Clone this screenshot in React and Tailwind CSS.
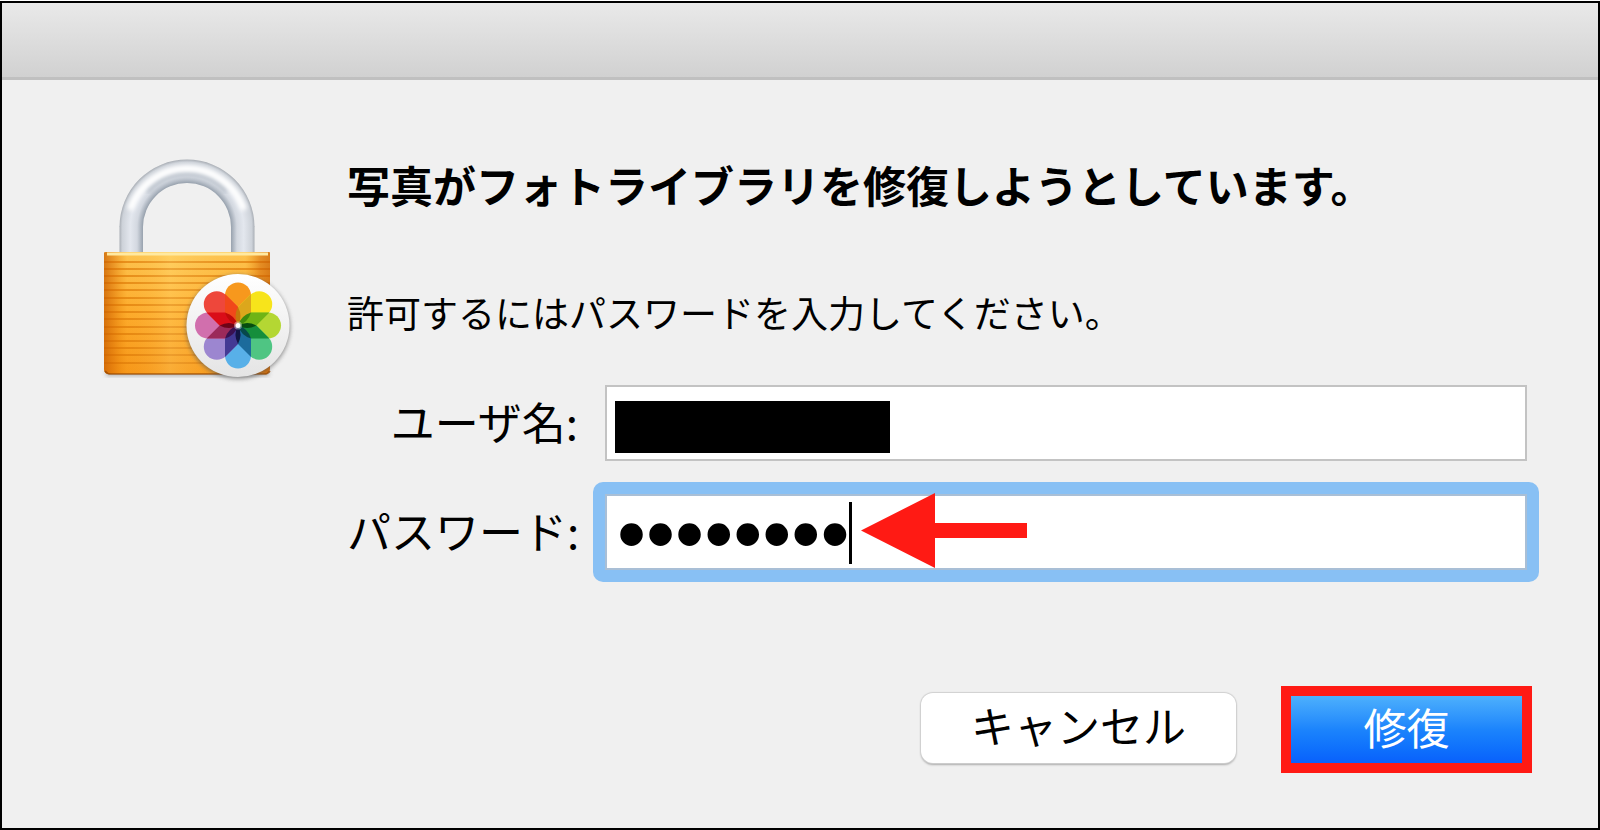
import React, { useState } from "react";

const petals = [
  { angle: 0, color: "#f7981d" },
  { angle: 45, color: "#f7e41b" },
  { angle: 90, color: "#b4d733" },
  { angle: 135, color: "#4fc583" },
  { angle: 180, color: "#58b0e8" },
  { angle: 225, color: "#9c86d0" },
  { angle: 270, color: "#d16fad" },
  { angle: 315, color: "#ee473b" },
];

const overlaps = [
  { angle: 0, color: "#dca71c" },
  { angle: 45, color: "#6fb416" },
  { angle: 90, color: "#158e3c" },
  { angle: 135, color: "#1c6b9c" },
  { angle: 180, color: "#433a94" },
  { angle: 225, color: "#9b2a5a" },
  { angle: 270, color: "#da0d18" },
  { angle: 315, color: "#f1481a" },
];

const cores = [
  { angle: 0, color: "#c5780c" },
  { angle: 45, color: "#3f8a0c" },
  { angle: 90, color: "#064d10" },
  { angle: 135, color: "#07484a" },
  { angle: 180, color: "#121645" },
  { angle: 225, color: "#3a1150" },
  { angle: 270, color: "#6e0418" },
  { angle: 315, color: "#c00a0a" },
];

const grooves = [262, 269, 276, 283, 290, 298, 305, 312, 319, 327, 334, 341, 348, 355, 363];

function LockIcon() {
  return (
    <svg viewBox="96 152 200 232" className="h-[232px] w-[200px]" role="img" aria-label="ロック">
      <defs>
        <linearGradient id="body" x1="0" x2="0" y1="0" y2="1">
          <stop offset="0" stopColor="#ffcb58" />
          <stop offset="0.5" stopColor="#ffb030" />
          <stop offset="1" stopColor="#f89a1c" />
        </linearGradient>
        <linearGradient id="sides" x1="0" x2="1" y1="0" y2="0">
          <stop offset="0" stopColor="#c85c00" stopOpacity="0.75" />
          <stop offset="0.06" stopColor="#d86a00" stopOpacity="0.5" />
          <stop offset="0.14" stopColor="#e88000" stopOpacity="0.1" />
          <stop offset="0.4" stopColor="#ffe080" stopOpacity="0.25" />
          <stop offset="0.85" stopColor="#e88000" stopOpacity="0.1" />
          <stop offset="0.94" stopColor="#d06000" stopOpacity="0.55" />
          <stop offset="1" stopColor="#c85c00" stopOpacity="0.7" />
        </linearGradient>
        <linearGradient id="legs" x1="119.500" x2="254.500" y1="0" y2="0" gradientUnits="userSpaceOnUse">
          <stop offset="0" stopColor="#a9aeb5" />
          <stop offset="0.02" stopColor="#cdd2d9" />
          <stop offset="0.08" stopColor="#e3e7ee" />
          <stop offset="0.13" stopColor="#d3d8e0" />
          <stop offset="0.174" stopColor="#98a2ae" />
          <stop offset="0.826" stopColor="#98a2ae" />
          <stop offset="0.87" stopColor="#d3d8e0" />
          <stop offset="0.92" stopColor="#e3e7ee" />
          <stop offset="0.98" stopColor="#cdd2d9" />
          <stop offset="1" stopColor="#a9aeb5" />
        </linearGradient>
        <radialGradient id="arch" cx="187" cy="227" r="67.500" gradientUnits="userSpaceOnUse">
          <stop offset="0.652" stopColor="#98a2ae" />
          <stop offset="0.74" stopColor="#d3d8e0" />
          <stop offset="0.84" stopColor="#e3e7ee" />
          <stop offset="0.96" stopColor="#cdd2d9" />
          <stop offset="1" stopColor="#a9aeb5" />
        </radialGradient>
        <linearGradient id="badge" x1="0" x2="0" y1="0" y2="1">
          <stop offset="0" stopColor="#ffffff" />
          <stop offset="1" stopColor="#e4e4e4" />
        </linearGradient>
        <filter id="soft" x="-20%" y="-20%" width="140%" height="140%">
          <feGaussianBlur stdDeviation="2" />
        </filter>
      </defs>
      <path d="M119.500 254V226.500H143V254ZM231 254V226.500H254.500V254Z" fill="url(#legs)" />
      <path d="M119.500 227a67.500 67.500 0 0 1 135 0H231a44 44 0 0 0-88 0Z" fill="url(#arch)" />
      <path d="M148 190A53 53 0 0 1 226 190" fill="none" stroke="#7f8c9a" strokeWidth="5" strokeLinecap="round" opacity="0.4" filter="url(#soft)" />
      <path d="M131 207A60 60 0 0 1 243 207" fill="none" stroke="#ffffff" strokeWidth="7" strokeLinecap="round" filter="url(#soft)" />
      <rect x="106" y="370" width="163" height="6" fill="#777" opacity="0.5" filter="url(#soft)" />
      <path d="M104 253q0-1 2-1H269q1 0 1 1V369q-1 5-6 5H109q-5 0-5-5Z" fill="url(#body)" />
      {grooves.map((y) => (
        <path key={y} d={`M104 ${y}H270`} stroke="#df7d0b" strokeWidth="2" opacity="0.7" />
      ))}
      <path d="M104 253q0-1 2-1H269q1 0 1 1V369q-1 5-6 5H109q-5 0-5-5Z" fill="url(#sides)" />
      <path d="M107 254H268" stroke="#ffe9a0" strokeWidth="3" />
      <path d="M105 371q2 3 6 3H264q4 0 6-3" fill="none" stroke="#9a4a00" strokeWidth="1.500" opacity="0.8" />
      <circle cx="238" cy="327" r="52" fill="#555" opacity="0.6" filter="url(#soft)" />
      <circle cx="238" cy="325.500" r="51.500" fill="url(#badge)" />
      <g transform="translate(238 325.500)">
        {petals.map((p) => (
          <path key={p.angle} transform={`rotate(${p.angle})`} d="M0 0L-13-13V-30a13 13 0 0 1 26 0V-13Z" fill={p.color} />
        ))}
        {overlaps.map((o) => (
          <path key={o.angle} transform={`rotate(${o.angle})`} d="M0 0V-18.400L13-31.400V-13Z" fill={o.color} />
        ))}
        {cores.map((c) => (
          <path key={c.angle} transform={`rotate(${c.angle})`} d="M0 0Q-5-9 0-18.400Q5-9 0 0Z" fill={c.color} />
        ))}
        <circle r="4" fill="#fff" opacity="0.4" />
        <circle r="2.500" fill="#fff" />
      </g>
    </svg>
  );
}

function TextField({ id, children, focused, ...props }) {
  return (
    <div className="relative">
      {focused && <span className="absolute -inset-3 rounded-[10px] bg-[#88c0f4]" />}
      <input
        id={id}
        className={
          "relative block h-[76px] w-full border-2 bg-white px-[10px] caret-transparent outline-none " +
          (focused
            ? "border-[#a9bfd6] pt-1 font-['Liberation_Sans',sans-serif] text-[83px] leading-[68px]"
            : "border-[#c3c3c3] text-[44px]")
        }
        {...props}
      />
      {children}
    </div>
  );
}

export default function App() {
  const [name, setName] = useState("");
  const [password, setPassword] = useState("password");
  return (
    <div className="flex min-h-screen flex-col bg-white pt-px font-['Noto_Sans_CJK_JP',sans-serif] text-black">
      <div className="flex grow flex-col border-2 border-black bg-[#f0f0f0]">
        <header className="h-[77px] border-b-3 border-[#c0c0c0] bg-linear-to-b from-[#e9e9e9] to-[#d1d1d1]" />
        <form className="flex grow flex-col pb-[55px]" onSubmit={(e) => e.preventDefault()}>
          <div className="flex pr-[71px] pl-[94px]">
            <div className="w-[251px] shrink-0 pt-[72px]">
              <LockIcon />
            </div>
            <div className="min-w-0 grow pt-[74px]">
              <h1 className="text-[43px] leading-[60px] font-bold whitespace-nowrap">
                写真がフォトライブラリを修復しようとしています。
              </h1>
              <p className="mt-[70px] text-[37px] leading-[56px] whitespace-nowrap">
                許可するにはパスワードを入力してください。
              </p>
              <div className="mt-[45px] grid grid-cols-[231px_1fr] items-center gap-x-[27px] gap-y-[33px]">
                <label htmlFor="user" className="pb-1 text-right text-[44px] leading-[60px] whitespace-nowrap">
                  ユーザ名:
                </label>
                <TextField id="user" type="text" value={name} onChange={(e) => setName(e.target.value)}>
                  <span className="absolute top-4 left-[10px] h-[52px] w-[275px] bg-black" />
                </TextField>
                <label htmlFor="pass" className="pb-1 text-right text-[44px] leading-[60px] whitespace-nowrap">
                  パスワード:
                </label>
                <TextField id="pass" type="password" focused value={password} onChange={(e) => setPassword(e.target.value)}>
                  <span className="absolute top-2 left-[244px] h-[62px] w-[3px] bg-black" />
                  <svg viewBox="0 0 166 75" className="absolute -top-px left-[256px] h-[75px] w-[166px]" aria-hidden="true">
                    <path d="M0 37.500L74 0V30H166V45H74V75Z" fill="#ff1a14" />
                  </svg>
                </TextField>
              </div>
            </div>
          </div>
          <div className="mt-auto flex items-start justify-end gap-[45px] pr-[66px]">
            <button
              type="button"
              className="mt-[7px] h-[70px] w-[315px] rounded-xl bg-white pb-2 text-[43px] leading-[60px] shadow-[0_0_1px_1px_#d0d0d0,0_2px_2px_#aaaaaa]"
            >
              キャンセル
            </button>
            <button
              type="submit"
              className="h-[87px] w-[251px] border-10 border-[#ff1a14] bg-linear-to-b from-[#4db0fc] via-[#1c84fc] to-[#0a60fc] bg-origin-padding pb-2 text-[43px] leading-[60px] text-white"
            >
              修復
            </button>
          </div>
        </form>
      </div>
    </div>
  );
}
